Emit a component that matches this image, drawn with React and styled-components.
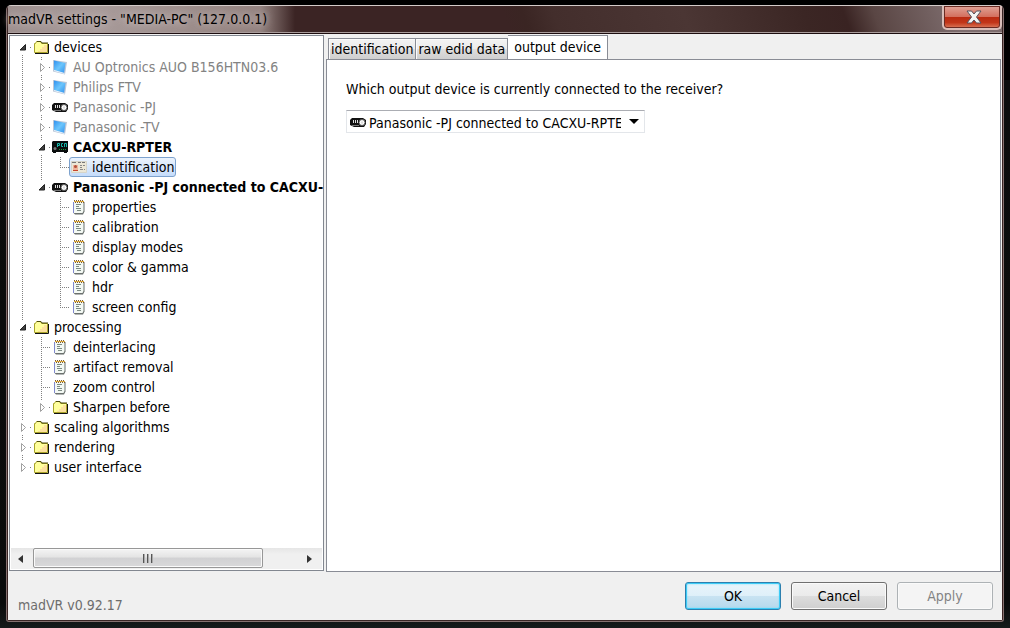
import { useRef, useState } from "react";
import styled, { createGlobalStyle, css } from "styled-components";

const GlobalStyle = createGlobalStyle`
  * { box-sizing: border-box; }
  body {
    margin: 0;
    background: #050505;
    font-family: Tahoma, "DejaVu Sans Condensed", "Noto Sans", sans-serif;
    font-size: 14px;
    line-height: 18px;
    color: #000;
  }
  button, select { font: inherit; color: inherit; }
`;

const Desktop = styled.div`
  display: flex;
  min-height: 100vh;
  padding: 5px 6px;
  padding-bottom: 6px;
  background: linear-gradient(#000 0 80px, #0c0d0d 80px, #0a0b0b 96%, #151a1a);
`;

const Window = styled.main`
  flex: 1;
  min-width: 0;
  display: flex;
  flex-direction: column;
  border: 1px solid #85706f;
  border-top-color: #d3cbc9;
  border-radius: 5px 5px 3px 3px;
  background: #3a2524;
  padding: 0 1px 1px;
`;

const TitleBar = styled.header`
  display: flex;
  justify-content: space-between;
  align-items: flex-start;
  height: 28px;
  border-bottom: 1px solid #1c0d0f;
  box-shadow: inset 0 -1px #a99c9b;
  border-radius: 4px 4px 0 0;
  background: linear-gradient(
    70deg,
    #3b2424 0 50%,
    #3a2523 52%,
    #432e2c 55%,
    #4b3634 68%,
    #3b2624 80%,
    #392322 84%,
    #5a4644 87%,
    #7d6c6d 95%
  );
`;

const Title = styled.h1`
  margin: 0;
  height: 26px;
  padding-right: 28px;
  font-size: 14px;
  font-weight: normal;
  line-height: 27px;
  white-space: nowrap;
  background: linear-gradient(90deg, #9d8f8e, #a89b9a 30%, #93827f 88%, transparent);
  text-shadow: 0 0 8px #cfc5c4, 0 0 6px #b9adac;
`;

const CloseButton = styled.button`
  width: 60px;
  height: 24px;
  padding: 0 0 0 3px;
  display: grid;
  place-items: center;
  border: 2px solid #d9bdb8;
  border-top: 0;
  border-radius: 0 0 5px 5px;
  background: linear-gradient(#e0a398, #d4705f 48%, #b92a12 50%, #c23518 75%, #dc7a5c);
  box-shadow: inset 0 0 0 1px #6b2a22;
`;

const Client = styled.div`
  flex: 1;
  display: flex;
  flex-direction: column;
  background: #f0f0f0;
`;

const Body = styled.div`
  flex: 1;
  display: flex;
  gap: 2px;
  padding: 1px 1px 0;
`;

const TreePane = styled.nav`
  width: 315px;
  flex: none;
  margin-bottom: 1px;
  display: flex;
  flex-direction: column;
  border: 1px solid #828790;
  background: #fff;
`;

const TreeList = styled.div`
  flex: 1;
  padding: 1px 0 0 2px;
  overflow: hidden;
`;

const Row = styled.div`
  display: flex;
  height: 20px;
`;

const dotsDown = "repeating-linear-gradient(#808080 0 1px, transparent 1px 2px)";
const dotsAcross = "repeating-linear-gradient(90deg, #808080 0 1px, transparent 1px 2px)";

/* One indent step: draws the dotted lines that join a row to its siblings. */
const Guide = styled.span`
  flex: none;
  display: block;
  width: 19px;
  height: 20px;
  background-repeat: no-repeat;
  ${(p) => p.$kind === "through" && css`
    background-image: ${dotsDown};
    background-position: 10px 0;
    background-size: 1px 20px;
  `}
  ${(p) => p.$kind === "leaf" && css`
    background-image: ${dotsDown}, ${dotsAcross};
    background-position: 10px 0, 10px 10px;
    background-size: 1px ${p.$last ? "10px" : "20px"}, 12px 1px;
  `}
  ${(p) => p.$kind === "branch" && css`
    background-image: ${dotsDown}, ${dotsDown}, ${dotsAcross};
    background-position: 10px 0, 10px 18px, 18px 10px;
    background-size: 1px ${p.$first ? "0" : "4px"}, 1px ${p.$last ? "0" : "2px"}, 4px 1px;
  `}
`;

const Expander = styled.button`
  display: block;
  width: 17px;
  height: 20px;
  padding: 0;
  border: 0;
  background: none;
  svg { display: block; }
`;

const NodeLabel = styled.button`
  flex: none;
  display: flex;
  align-items: center;
  gap: 5px;
  height: 20px;
  padding: 0 1px;
  border: 1px solid transparent;
  border-radius: 3px;
  background: none;
  white-space: nowrap;
  color: ${(p) => (p.$muted ? "#838383" : "#000")};
  font-weight: ${(p) => (p.$strong ? "bold" : "normal")};
  ${(p) => p.$selected && css`
    border-color: #7da2ce;
    background: linear-gradient(#ebf3fd, #c5dcfa);
  `}
`;

const ScrollBar = styled.div`
  display: flex;
  height: 21px;
  margin: 0 1px 1px;
  background: linear-gradient(#e6e6e6, #f0f0f0 30%);
`;

const ScrollArrow = styled.button`
  width: 22px;
  padding: 0 4px 0 0;
  display: grid;
  place-items: center;
  border: 0;
  background: none;
`;

const ScrollTrack = styled.div`
  flex: 1;
  display: flex;
`;

const ScrollThumb = styled.div`
  width: 86%;
  height: 20px;
  display: flex;
  justify-content: center;
  align-items: center;
  gap: 2px;
  border: 1px solid #979797;
  border-radius: 2px;
  background: linear-gradient(#f4f4f4, #e4e4e4 45%, #d1d1d3 50%, #d9d9da);
  box-shadow: inset 0 0 0 1px #fafafa;
`;

const Grip = styled.span`
  width: 2px;
  height: 9px;
  border-left: 1px solid #555;
  border-right: 1px solid #aaa;
`;

const Main = styled.section`
  flex: 1;
  min-width: 0;
  display: flex;
  flex-direction: column;
`;

const TabList = styled.div`
  display: flex;
  align-items: flex-end;
  height: 24px;
  padding-left: 2px;
`;

const Tab = styled.button`
  height: 21px;
  padding: 0 2px;
  white-space: nowrap;
  border: 1px solid #898c95;
  border-bottom: 0;
  border-left-width: ${(p) => (p.$first ? "1px" : "0")};
  background: linear-gradient(#f3f3f3, #ebebeb 48%, #dddddd 52%, #cfcfcf);
  box-shadow: inset 1px 1px #fbfbfb;
  ${(p) => p.$active && css`
    height: 25px;
    margin-bottom: -1px;
    padding: 0 6px 2px;
    background: #fff;
    box-shadow: none;
  `}
`;

const Panel = styled.div`
  flex: 1;
  padding: 20px 19px;
  border: 1px solid #898c95;
  background: #fff;
`;

const Question = styled.label`
  display: block;
  margin-bottom: 12px;
`;

const SelectBox = styled.div`
  display: grid;
  grid-template-columns: 23px 1fr 24px;
  align-items: center;
  width: 299px;
  max-width: 100%;
  height: 23px;
  border: 1px solid #e3e6ea;
  border-top-color: #abadb3;
  svg {
    grid-row: 1;
    z-index: 1;
    pointer-events: none;
  }
  svg:first-child { grid-column: 1; margin-left: 3px; }
  svg:last-child { grid-column: 3; margin-left: 9px; }
`;

const Select = styled.select`
  grid-row: 1;
  grid-column: 1 / -1;
  width: 100%;
  height: 21px;
  padding: 3px 23px 0 22px;
  border: 0;
  appearance: none;
  background: transparent;
`;

const Footer = styled.footer`
  display: flex;
  align-items: flex-end;
  gap: 10px;
  padding: 10px 9px;
`;

const Version = styled.span`
  flex: 1;
  margin-bottom: -4px;
  padding-left: 1px;
  color: #6d6d6d;
`;

const DialogButton = styled.button`
  width: 96px;
  height: 28px;
  padding: 0;
  border: 1px solid #707070;
  border-radius: 3px;
  background: linear-gradient(#f2f2f2, #ebebeb 48%, #dddddd 50%, #cfcfcf);
  box-shadow: inset 0 0 0 1px #fafafa;
  ${(p) => p.$primary && css`
    border-color: #2c7fae;
    background: linear-gradient(#e8f4fb, #dff0f9 48%, #c8e3f2 50%, #b5d9ec);
    box-shadow: inset 0 0 0 1px #3ccbf6, inset 0 0 2px 1px #7fdcf8;
  `}
  &:disabled {
    color: #838383;
    border-color: #adb2b5;
    background: #f4f4f4;
  }
`;

const FolderIcon = () => (
  <svg width="16" height="16" viewBox="0 0 16 16" aria-hidden="true">
    <path d="M2 14.500h13.500V5" fill="none" stroke="#111" />
    <path d="M1.500 13.500v-9h1l1-2h4l1 2h6v9z" fill="#ffff9c" stroke="#a8a32a" />
    <path d="M5 13v-1h2v-2h2V8h2V6h3v7z" fill="#fbd3a0" opacity="0.7" />
    <path d="M4 2.500h4l1 1.500h6" fill="none" stroke="#4a480c" />
  </svg>
);

const MonitorIcon = () => (
  <svg width="16" height="16" viewBox="0 0 16 16" aria-hidden="true">
    <defs>
      <linearGradient id="screen" x1="0" y1="0" x2="1" y2="1">
        <stop offset="0" stopColor="#2f90ee" />
        <stop offset="0.5" stopColor="#6cc6fc" />
        <stop offset="1" stopColor="#2f8fee" />
      </linearGradient>
    </defs>
    <path d="M1 1l14 2-2 12.500L1 12.500z" fill="#bcc6d6" />
    <path d="M2 1.500l11.500 2.500-1.500 10L2 11z" fill="url(#screen)" />
    <path d="M2 11.500l10.500 3" stroke="#e3f2ff" />
  </svg>
);

const ProjectorIcon = () => (
  <svg width="16" height="16" viewBox="0 0 16 16" aria-hidden="true">
    <path d="M2 4h11l3 2v4l-2 3H4l-4-2V6z" fill="#111" />
    <path d="M3.500 6v3M5.500 6v3M7.500 6v3" stroke="#ddd" />
    <circle cx="12" cy="8.500" r="3" fill="#fff" stroke="#555" />
    <circle cx="12" cy="8.500" r="1.200" fill="#ddd" />
    <path d="M2 11.500h7" stroke="#777" />
  </svg>
);

const ReceiverIcon = () => (
  <svg width="16" height="16" viewBox="0 0 16 16" aria-hidden="true">
    <path d="M0 3l1-1h15v11h-1v1h-3v-1H4v1H1v-1H0z" fill="#0b0e0e" />
    <path
      d="M5.500 8V4.500h2v2h-2M11 4.500H9.500v3H11M12.500 8V4.500h2V8"
      fill="none"
      stroke="#16b5a8"
    />
    <circle cx="3" cy="9.500" r="1.500" fill="#777" />
    <path d="M7 10.500h7" stroke="#1c9c3c" strokeDasharray="1 1" />
  </svg>
);

const CardIcon = () => (
  <svg width="16" height="16" viewBox="0 0 16 16" aria-hidden="true">
    <path d="M.5 2.500h15v11H.5z" fill="#ece7d6" stroke="#d6d4c8" />
    <path d="M1 3.500h4M7 3.500h3M11 3.500h3" stroke="#777" />
    <path d="M2 6h5v6H2z" fill="#efb49c" />
    <circle cx="4.500" cy="7.500" r="1.500" fill="#b0503a" />
    <path d="M2 11.500h5" stroke="#c8442c" />
    <path d="M9 6.500h2M12 6.500h2M9 8.500h2M9 10.500h3M13 10.500h1" stroke="#888" />
  </svg>
);

const NotepadIcon = () => (
  <svg width="16" height="16" viewBox="0 0 16 16" aria-hidden="true">
    <path d="M3 3h10.500v9.500L12 15.500H4L2.500 14z" fill="#6b706e" />
    <path d="M3 3h9.500v9l-1 2H3z" fill="#f4f9f4" />
    <path d="M2.500 3v11" stroke="#8088cc" />
    <path d="M5 5.500h5M5 7.500h3M5 9.500h5M6 11.500h4" stroke="#7c8b84" />
    <path d="M3 2.500h10" stroke="#d9a53a" />
    <path d="M3 1.500h10M4 3.500h9" stroke="#7a5c30" strokeDasharray="1 1" />
  </svg>
);

const icons = {
  folder: FolderIcon,
  monitor: MonitorIcon,
  projector: ProjectorIcon,
  receiver: ReceiverIcon,
  card: CardIcon,
  notepad: NotepadIcon,
};

const page = (label) => ({ label, icon: "notepad" });

const tree = [
  {
    label: "devices",
    icon: "folder",
    open: true,
    children: [
      { label: "AU Optronics AUO B156HTN03.6", icon: "monitor", muted: true, children: [] },
      { label: "Philips FTV", icon: "monitor", muted: true, children: [] },
      { label: "Panasonic -PJ", icon: "projector", muted: true, children: [] },
      { label: "Panasonic -TV", icon: "monitor", muted: true, children: [] },
      {
        label: "CACXU-RPTER",
        icon: "receiver",
        strong: true,
        open: true,
        children: [{ label: "identification", icon: "card" }],
      },
      {
        label: "Panasonic -PJ connected to CACXU-RPTER",
        icon: "projector",
        strong: true,
        open: true,
        children: [
          page("properties"),
          page("calibration"),
          page("display modes"),
          page("color & gamma"),
          page("hdr"),
          page("screen config"),
        ],
      },
    ],
  },
  {
    label: "processing",
    icon: "folder",
    open: true,
    children: [
      page("deinterlacing"),
      page("artifact removal"),
      page("zoom control"),
      { label: "Sharpen before", icon: "folder", children: [] },
    ],
  },
  { label: "scaling algorithms", icon: "folder", children: [] },
  { label: "rendering", icon: "folder", children: [] },
  { label: "user interface", icon: "folder", children: [] },
];

const TreeNode = ({ node, trail, first, last, selected, onSelect }) => {
  const [open, setOpen] = useState(Boolean(node.open));
  const Icon = icons[node.icon];
  const branch = Boolean(node.children);

  return (
    <>
      <Row>
        {trail.map((through, i) => (
          <Guide key={i} $kind={through ? "through" : "blank"} />
        ))}
        <Guide $kind={branch ? "branch" : "leaf"} $first={first} $last={last}>
          {branch && (
            <Expander aria-label={node.label} aria-expanded={open} onClick={() => setOpen(!open)}>
              <svg width="17" height="20" viewBox="0 0 17 20">
                {open ? (
                  <path d="M13.500 7.500v5.500h-5.500z" fill="#404040" stroke="#222" />
                ) : (
                  <path d="M9.500 6.500l4 4-4 4z" fill="#fff" stroke="#a0a0a0" />
                )}
              </svg>
            </Expander>
          )}
        </Guide>
        <NodeLabel
          $muted={node.muted}
          $strong={node.strong}
          $selected={selected === node.label}
          onClick={() => onSelect(node.label)}
        >
          <Icon />
          {node.label}
        </NodeLabel>
      </Row>
      {open &&
        branch &&
        node.children.map((child, i) => (
          <TreeNode
            key={child.label}
            node={child}
            trail={[...trail, !last]}
            last={i === node.children.length - 1}
            selected={selected}
            onSelect={onSelect}
          />
        ))}
    </>
  );
};

const DeviceTree = () => {
  const [selected, setSelected] = useState("identification");
  const listRef = useRef(null);
  const scroll = (left) => listRef.current.scrollBy({ left });

  return (
    <TreePane>
      <TreeList ref={listRef}>
        {tree.map((node, i) => (
          <TreeNode
            key={node.label}
            node={node}
            trail={[]}
            first={i === 0}
            last={i === tree.length - 1}
            selected={selected}
            onSelect={setSelected}
          />
        ))}
      </TreeList>
      <ScrollBar>
        <ScrollArrow aria-label="Scroll left" onClick={() => scroll(-20)}>
          <svg width="5" height="8" viewBox="0 0 5 8"><path d="M5 0v8L0 4z" fill="#333" /></svg>
        </ScrollArrow>
        <ScrollTrack>
          <ScrollThumb>
            <Grip />
            <Grip />
            <Grip />
          </ScrollThumb>
        </ScrollTrack>
        <ScrollArrow aria-label="Scroll right" onClick={() => scroll(20)}>
          <svg width="5" height="8" viewBox="0 0 5 8"><path d="M0 0v8l5-4z" fill="#333" /></svg>
        </ScrollArrow>
      </ScrollBar>
    </TreePane>
  );
};

const tabs = ["identification", "raw edid data", "output device"];

const App = () => {
  const [tab, setTab] = useState("output device");

  return (
    <>
      <GlobalStyle />
      <Desktop>
        <Window>
          <TitleBar>
            <Title>madVR settings - "MEDIA-PC" (127.0.0.1)</Title>
            <CloseButton aria-label="Close">
              <svg width="16" height="14" viewBox="0 0 16 14">
                <path
                  d="M1 1h4.500L8 4l2.500-3H15l-4.500 6L15 13h-4.500L8 10l-2.500 3H1l4.500-6z"
                  fill="#f4f4f4"
                  stroke="#55505c"
                />
              </svg>
            </CloseButton>
          </TitleBar>
          <Client>
            <Body>
              <DeviceTree />
              <Main>
                <TabList role="tablist">
                  {tabs.map((name, i) => (
                    <Tab
                      key={name}
                      role="tab"
                      aria-selected={tab === name}
                      $active={tab === name}
                      $first={i === 0}
                      onClick={() => setTab(name)}
                    >
                      {name}
                    </Tab>
                  ))}
                </TabList>
                <Panel role="tabpanel">
                  <Question htmlFor="output">
                    Which output device is currently connected to the receiver?
                  </Question>
                  <SelectBox>
                    <ProjectorIcon />
                    <Select id="output">
                      <option>Panasonic -PJ connected to CACXU-RPTER</option>
                    </Select>
                    <svg width="10" height="5" viewBox="0 0 10 5" aria-hidden="true">
                      <path d="M0 0h10L5 5z" />
                    </svg>
                  </SelectBox>
                </Panel>
              </Main>
            </Body>
            <Footer>
              <Version>madVR v0.92.17</Version>
              <DialogButton $primary>OK</DialogButton>
              <DialogButton>Cancel</DialogButton>
              <DialogButton disabled>Apply</DialogButton>
            </Footer>
          </Client>
        </Window>
      </Desktop>
    </>
  );
};

export default App;
